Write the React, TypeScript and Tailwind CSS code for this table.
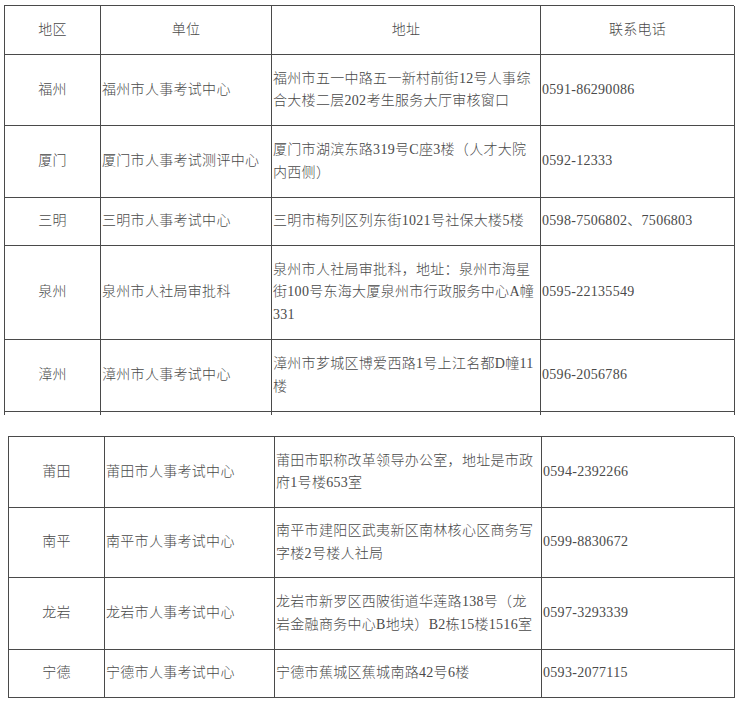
const font = { fontFamily: '"Liberation Serif", "Noto Sans CJK SC", serif' };

type Row = {
  h: number;
  region: string;
  unit: string;
  addr: string[];
  phone: string;
};

const top: Row[] = [
  {
    h: 71,
    region: "福州",
    unit: "福州市人事考试中心",
    addr: ["福州市五一中路五一新村前街12号人事综", "合大楼二层202考生服务大厅审核窗口"],
    phone: "0591-86290086",
  },
  {
    h: 72,
    region: "厦门",
    unit: "厦门市人事考试测评中心",
    addr: ["厦门市湖滨东路319号C座3楼（人才大院", "内西侧）"],
    phone: "0592-12333",
  },
  {
    h: 48,
    region: "三明",
    unit: "三明市人事考试中心",
    addr: ["三明市梅列区列东街1021号社保大楼5楼"],
    phone: "0598-7506802、7506803",
  },
  {
    h: 94,
    region: "泉州",
    unit: "泉州市人社局审批科",
    addr: ["泉州市人社局审批科，地址：泉州市海星", "街100号东海大厦泉州市行政服务中心A幢", "331"],
    phone: "0595-22135549",
  },
  {
    h: 72,
    region: "漳州",
    unit: "漳州市人事考试中心",
    addr: ["漳州市芗城区博爱西路1号上江名都D幢11", "楼"],
    phone: "0596-2056786",
  },
];

const bottom: Row[] = [
  {
    h: 71,
    region: "莆田",
    unit: "莆田市人事考试中心",
    addr: ["莆田市职称改革领导办公室，地址是市政", "府1号楼653室"],
    phone: "0594-2392266",
  },
  {
    h: 70,
    region: "南平",
    unit: "南平市人事考试中心",
    addr: ["南平市建阳区武夷新区南林核心区商务写", "字楼2号楼人社局"],
    phone: "0599-8830672",
  },
  {
    h: 72,
    region: "龙岩",
    unit: "龙岩市人事考试中心",
    addr: ["龙岩市新罗区西陂街道华莲路138号（龙", "岩金融商务中心B地块）B2栋15楼1516室"],
    phone: "0597-3293339",
  },
  {
    h: 48,
    region: "宁德",
    unit: "宁德市人事考试中心",
    addr: ["宁德市蕉城区蕉城南路42号6楼"],
    phone: "0593-2077115",
  },
];

const cell = "flex items-center border-r border-b border-[#4a4a4a]";

function Rows({ rows }: { rows: Row[] }) {
  return (
    <>
      {rows.map((r) => (
        <div key={r.region} className="contents">
          <div className={`${cell} justify-center`} style={{ height: r.h }}>
            {r.region}
          </div>
          <div className={`${cell} pl-[1px]`}>{r.unit}</div>
          <div className={`${cell} pl-[1px]`}>
            <div>
              {r.addr.map((l) => (
                <div key={l} className="whitespace-nowrap">
                  {l}
                </div>
              ))}
            </div>
          </div>
          <div className={`${cell} pl-[1px]`}>{r.phone}</div>
        </div>
      ))}
    </>
  );
}

export default function App() {
  return (
    <div
      className="w-[740px] h-[701px] bg-white text-[#4a4a4a] font-light text-[14px] leading-[22.5px] tracking-[0.3px] pt-[5px] overflow-hidden"
      style={font}
    >
      <div className="ml-[4px] w-[730px] grid grid-cols-[96px_171px_269px_194px] border-l border-t border-[#4a4a4a]">
        <div className={`${cell} justify-center h-[49px]`}>地区</div>
        <div className={`${cell} justify-center`}>单位</div>
        <div className={`${cell} justify-center`}>地址</div>
        <div className={`${cell} justify-center`}>联系电话</div>
        <Rows rows={top} />
        <div className="h-[3px] border-r border-[#4a4a4a]" />
        <div className="border-r border-[#4a4a4a]" />
        <div className="border-r border-[#4a4a4a]" />
        <div className="border-r border-[#4a4a4a]" />
      </div>

      <div className="mt-[21px] ml-[8px] w-[726px] grid grid-cols-[96px_170px_267px_193px] border-l border-t border-[#4a4a4a]">
        <Rows rows={bottom} />
      </div>
    </div>
  );
}
